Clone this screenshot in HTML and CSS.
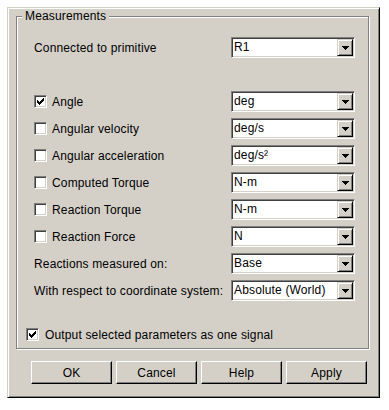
FILE: index.html
```html
<!DOCTYPE html>
<html lang="en">

<head>
  <meta charset="UTF-8">
  <link rel="stylesheet" href="styles.css">
  <title>Measurements</title>
</head>

<body>

  <div class="dialog">
    <fieldset class="group">
      <legend>Measurements</legend>
      <div class="group-body">
        <div class="row">
          <span class="label">Connected to primitive</span>
          <div class="combo"><span class="combo-text">R1</span><span class="combo-btn"><svg width="7" height="4" viewBox="0 0 7 4"><path d="M0 0h7v1h-1v1h-1v1h-1v1h-1v-1h-1v-1h-1v-1h-1z"/></svg></span></div>
        </div>

        <div class="rows">
          <div class="row">
            <span class="label"><span class="check"><svg width="11" height="11" viewBox="0 0 11 11"><path d="M2 4h1v1h1v1h1v-1h1v-1h1v-1h1v-1h1v3h-1v1h-1v1h-1v1h-1v1h-1v-1h-1v-1h-1z"/></svg></span>Angle</span>
            <div class="combo"><span class="combo-text">deg</span><span class="combo-btn"><svg width="7" height="4" viewBox="0 0 7 4"><path d="M0 0h7v1h-1v1h-1v1h-1v1h-1v-1h-1v-1h-1v-1h-1z"/></svg></span></div>
          </div>
          <div class="row">
            <span class="label"><span class="check"></span>Angular velocity</span>
            <div class="combo"><span class="combo-text">deg/s</span><span class="combo-btn"><svg width="7" height="4" viewBox="0 0 7 4"><path d="M0 0h7v1h-1v1h-1v1h-1v1h-1v-1h-1v-1h-1v-1h-1z"/></svg></span></div>
          </div>
          <div class="row">
            <span class="label"><span class="check"></span>Angular acceleration</span>
            <div class="combo"><span class="combo-text">deg/s²</span><span class="combo-btn"><svg width="7" height="4" viewBox="0 0 7 4"><path d="M0 0h7v1h-1v1h-1v1h-1v1h-1v-1h-1v-1h-1v-1h-1z"/></svg></span></div>
          </div>
          <div class="row">
            <span class="label"><span class="check"></span>Computed Torque</span>
            <div class="combo"><span class="combo-text">N-m</span><span class="combo-btn"><svg width="7" height="4" viewBox="0 0 7 4"><path d="M0 0h7v1h-1v1h-1v1h-1v1h-1v-1h-1v-1h-1v-1h-1z"/></svg></span></div>
          </div>
          <div class="row">
            <span class="label"><span class="check"></span>Reaction Torque</span>
            <div class="combo"><span class="combo-text">N-m</span><span class="combo-btn"><svg width="7" height="4" viewBox="0 0 7 4"><path d="M0 0h7v1h-1v1h-1v1h-1v1h-1v-1h-1v-1h-1v-1h-1z"/></svg></span></div>
          </div>
          <div class="row">
            <span class="label"><span class="check"></span>Reaction Force</span>
            <div class="combo"><span class="combo-text">N</span><span class="combo-btn"><svg width="7" height="4" viewBox="0 0 7 4"><path d="M0 0h7v1h-1v1h-1v1h-1v1h-1v-1h-1v-1h-1v-1h-1z"/></svg></span></div>
          </div>
          <div class="row">
            <span class="label">Reactions measured on:</span>
            <div class="combo"><span class="combo-text">Base</span><span class="combo-btn"><svg width="7" height="4" viewBox="0 0 7 4"><path d="M0 0h7v1h-1v1h-1v1h-1v1h-1v-1h-1v-1h-1v-1h-1z"/></svg></span></div>
          </div>
          <div class="row">
            <span class="label">With respect to coordinate system:</span>
            <div class="combo"><span class="combo-text">Absolute (World)</span><span class="combo-btn"><svg width="7" height="4" viewBox="0 0 7 4"><path d="M0 0h7v1h-1v1h-1v1h-1v1h-1v-1h-1v-1h-1v-1h-1z"/></svg></span></div>
          </div>
        </div>

        <div class="output-row">
          <span class="check"><svg width="11" height="11" viewBox="0 0 11 11"><path d="M2 4h1v1h1v1h1v-1h1v-1h1v-1h1v-1h1v3h-1v1h-1v1h-1v1h-1v1h-1v-1h-1v-1h-1z"/></svg></span>Output selected parameters as one signal
        </div>
      </div>
    </fieldset>

    <div class="buttons">
      <div class="btn">OK</div>
      <div class="btn">Cancel</div>
      <div class="btn">Help</div>
      <div class="btn">Apply</div>
    </div>
  </div>

</body>

</html>
```

FILE: styles.css
```css
body {
  margin: 0;
  padding: 7px;
  background-color: #fff;
  font-family: 'Liberation Sans', Arial, sans-serif;
  font-size: 12px;
  letter-spacing: 0.15px;
  color: #000;
}

.dialog {
  width: 373px;
  box-sizing: border-box;
  background-color: #d4d0c8;
  border: 1px solid;
  border-color: #d4d0c8 #000 #000 #d4d0c8;
  box-shadow: inset 1px 1px 0 #fff, inset -1px -1px 0 #808080;
  padding: 1px 10px 13px 8px;
}

.group {
  margin: 0;
  padding: 0;
  min-width: 0;
  border: 1px solid #808080;
  box-shadow: inset 1px 1px 0 #fff, 1px 1px 0 #fff;
}

.group legend {
  margin-left: 5px;
  padding: 0 3px;
  line-height: 14px;
  background-color: #d4d0c8;
}

.group-body {
  padding: 14px 13px 7px 17px;
}

.row {
  display: grid;
  grid-template-columns: 1fr 124px;
  align-items: center;
  height: 21px;
}

.rows {
  margin-top: 33px;
  display: flex;
  flex-direction: column;
  gap: 6px;
}

.label {
  display: flex;
  align-items: center;
  gap: 5px;
  white-space: nowrap;
}

.check {
  width: 13px;
  height: 13px;
  box-sizing: border-box;
  flex: none;
  background-color: #fff;
  border: 1px solid;
  border-color: #808080 #fff #fff #808080;
  box-shadow: inset 1px 1px 0 #404040, inset -1px -1px 0 #d4d0c8;
}

.check svg {
  display: block;
  shape-rendering: crispEdges;
}

.combo {
  display: flex;
  height: 21px;
  box-sizing: border-box;
  background-color: #fff;
  border: 1px solid;
  border-color: #808080 #fff #fff #808080;
  box-shadow: inset 1px 1px 0 #404040, inset -1px -1px 0 #d4d0c8;
  padding: 1px;
}

.combo-text {
  flex: 1;
  line-height: 17px;
  padding-left: 1px;
  white-space: nowrap;
  overflow: hidden;
}

.combo-btn {
  width: 16px;
  height: 17px;
  box-sizing: border-box;
  flex: none;
  display: flex;
  align-items: center;
  justify-content: center;
  background-color: #d4d0c8;
  border: 1px solid;
  border-color: #d4d0c8 #000 #000 #d4d0c8;
  box-shadow: inset 1px 1px 0 #fff, inset -1px -1px 0 #808080;
}

.combo-btn svg {
  display: block;
  shape-rendering: crispEdges;
}

.output-row {
  margin: 27px 0 0 -8px;
  height: 13px;
  display: flex;
  align-items: center;
  gap: 6px;
  white-space: nowrap;
}

.buttons {
  margin: 12px 0 0 15px;
  display: flex;
  gap: 4px;
}

.btn {
  width: 81px;
  height: 23px;
  box-sizing: border-box;
  display: flex;
  align-items: center;
  justify-content: center;
  border: 1px solid;
  border-color: #fff #000 #000 #fff;
  box-shadow: inset -1px -1px 0 #808080;
}
```
